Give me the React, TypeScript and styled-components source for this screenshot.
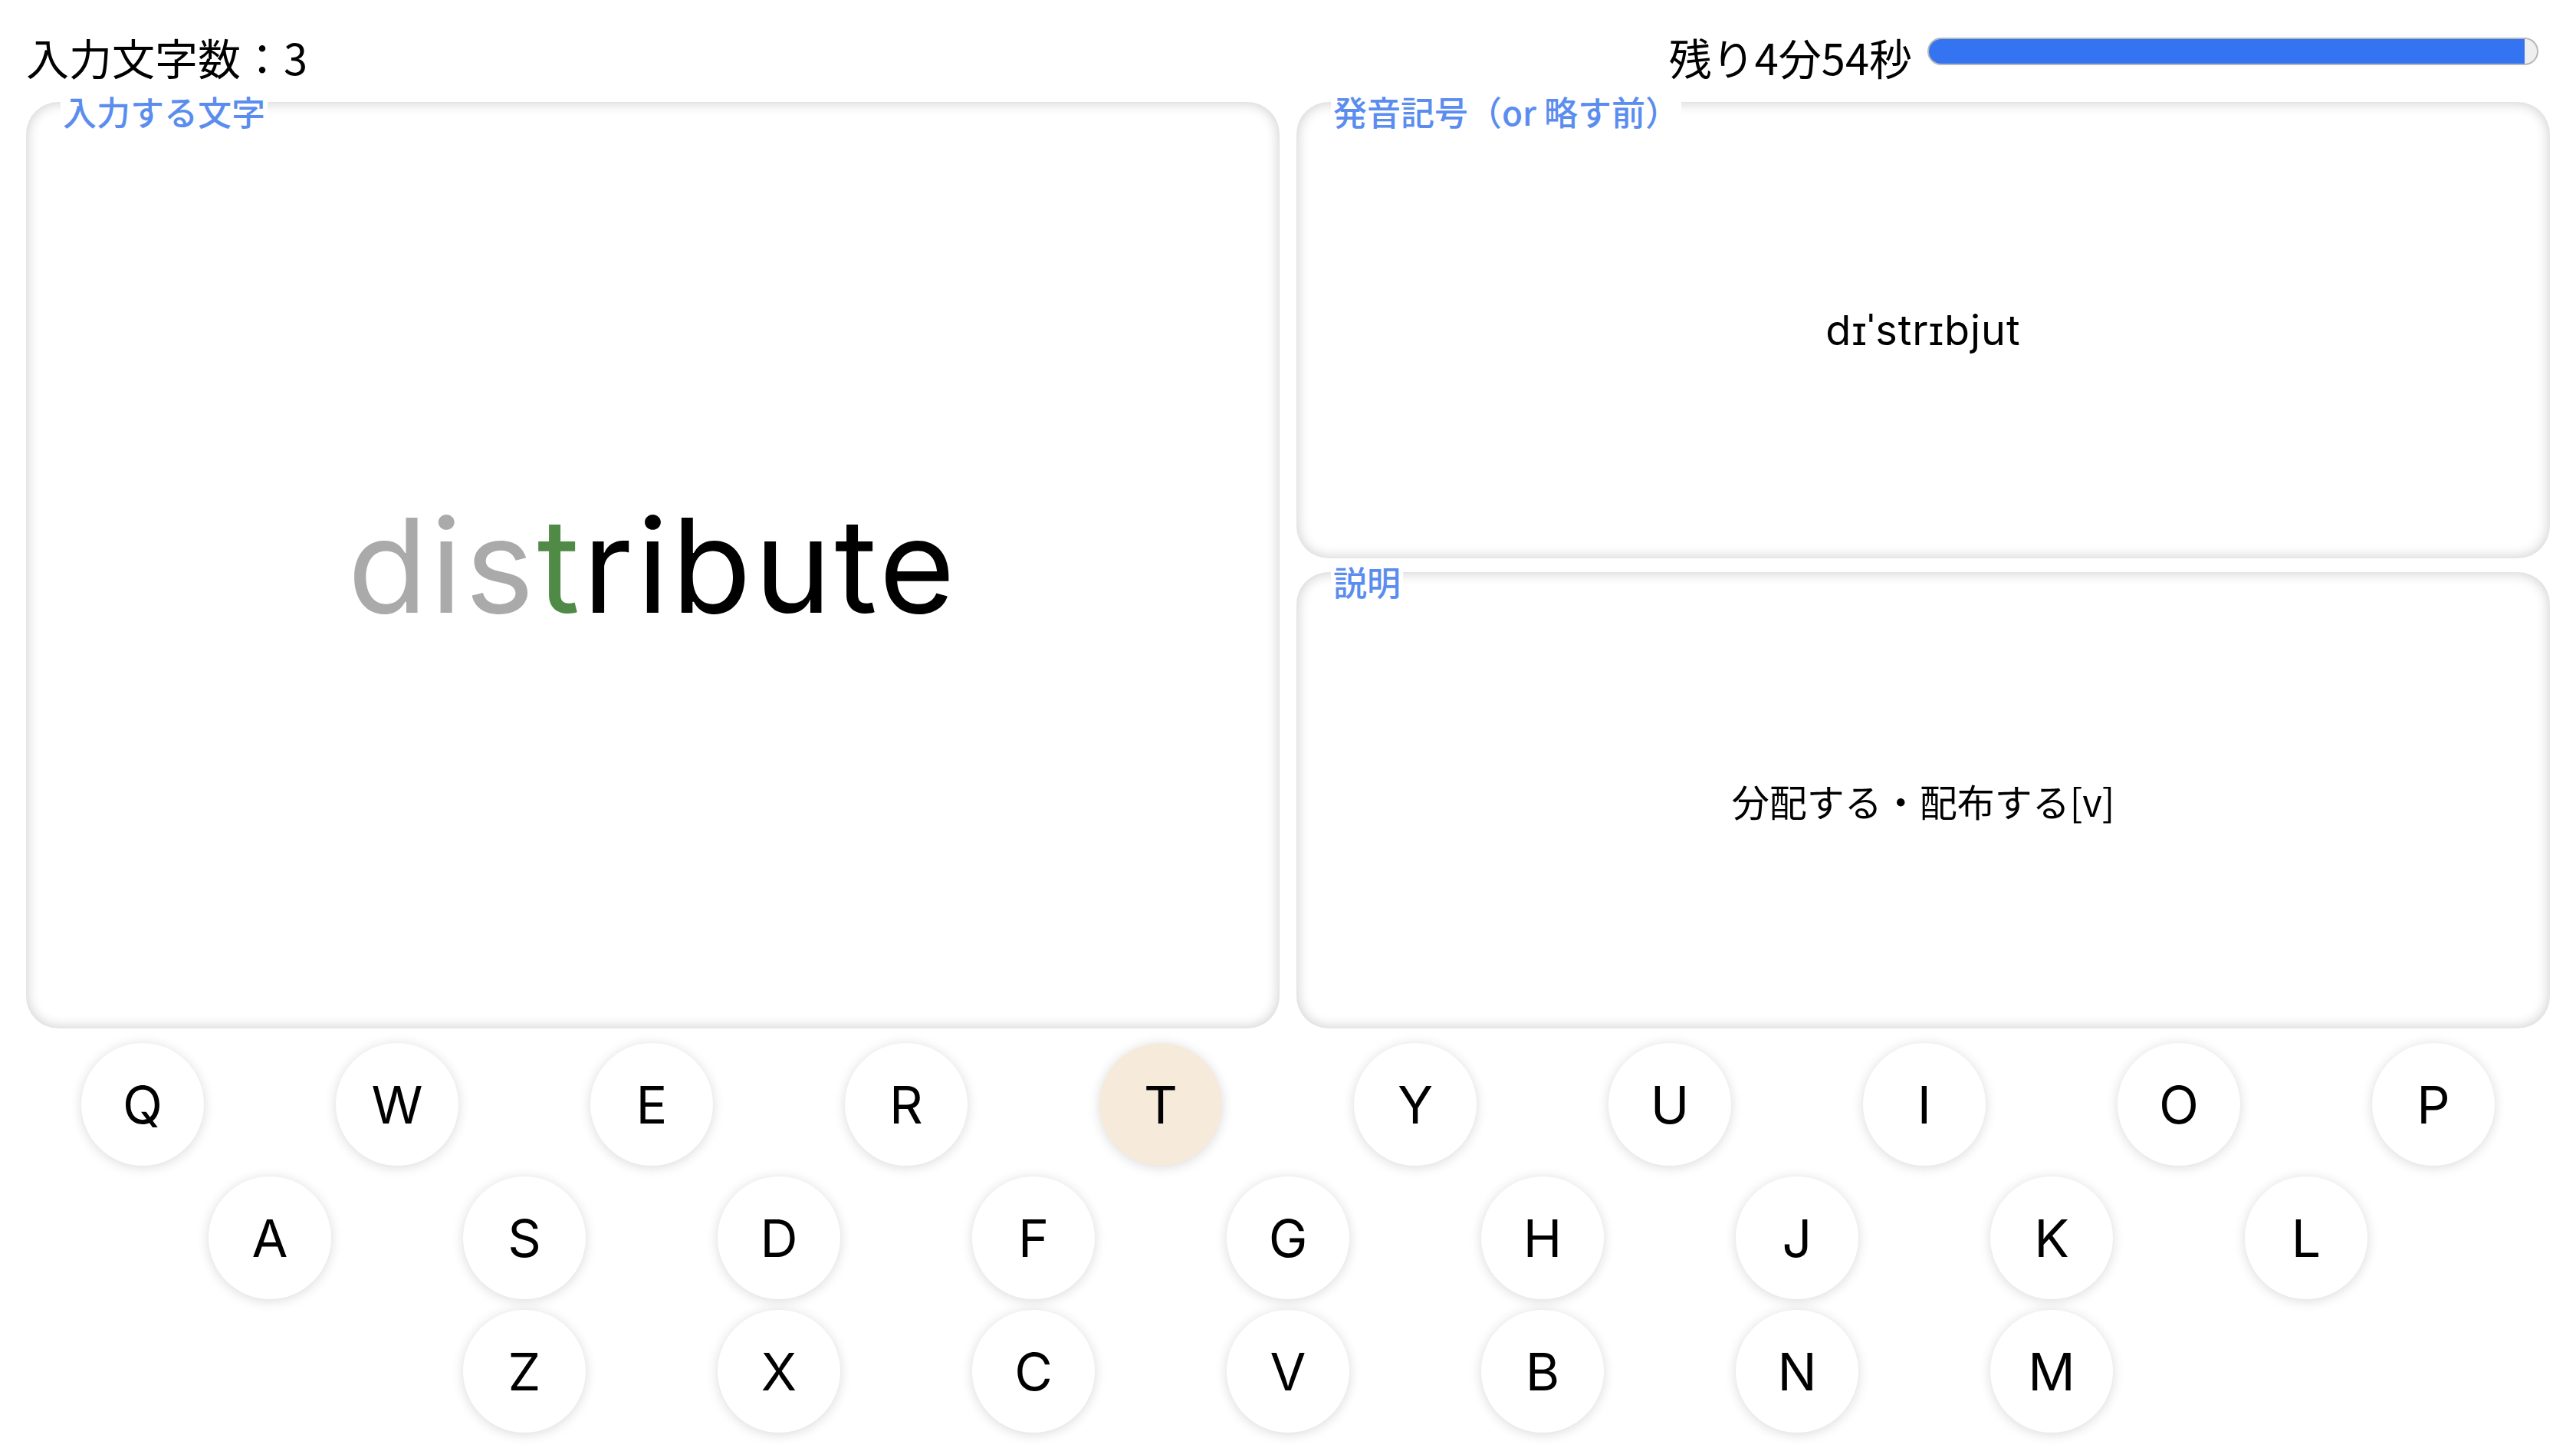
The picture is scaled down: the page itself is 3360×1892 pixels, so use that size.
import * as React from "react"
import styled, { createGlobalStyle } from "styled-components"

const GlobalStyle = createGlobalStyle`
  html, body {
    margin: 0;
    padding: 0;
    background: #ffffff;
  }
  body {
    font-family: "Inter", "Noto Sans CJK JP", sans-serif;
    color: #000;
  }
`

const Page = styled.div`
  width: 3360px;
  height: 1892px;
  box-sizing: border-box;
  padding: 0 34px;
  overflow: hidden;
`

const Header = styled.header`
  display: flex;
  justify-content: space-between;
  align-items: center;
  height: 84px;
  margin-top: 32px;
  margin-bottom: 17px;
`

const HeaderText = styled.div`
  font-family: "Noto Sans CJK JP", sans-serif;
  font-size: 56px;
  line-height: 84px;
  white-space: nowrap;
`

const Timer = styled.div`
  display: flex;
  align-items: center;
  gap: 20px;
  margin-right: 15px;
`

const Track = styled.div`
  position: relative;
  width: 797px;
  height: 36px;
  margin-bottom: 14px;
  box-sizing: border-box;
  border: 2px solid #b8b8b8;
  border-radius: 18px;
  background: #efefef;
  overflow: hidden;
`

const Fill = styled.div`
  height: 100%;
  margin: -2px 0 0 -2px;
  box-sizing: content-box;
  border: 2px solid #5670a8;
  border-right: none;
  border-radius: 18px 0 0 18px;
  background: #3574f0;
`

const Panels = styled.div`
  display: grid;
  grid-template-columns: 1fr 1fr;
  grid-template-rows: 595px 595px;
  column-gap: 22px;
  row-gap: 18px;
`

const Panel = styled.section<{ $tall?: boolean }>`
  position: relative;
  grid-row: ${(p) => (p.$tall ? "1 / span 2" : "auto")};
  display: flex;
  align-items: center;
  justify-content: center;
  border-radius: 42px;
  background: #fff;
  box-shadow: inset 0 0 16px 2px rgba(0, 0, 0, 0.18);
`

const Label = styled.span`
  position: absolute;
  top: -14px;
  left: 45px;
  padding: 0 3px;
  background: #fff;
  color: #5b8def;
  font-family: "Noto Sans CJK JP", sans-serif;
  font-size: 44px;
  font-weight: 500;
  line-height: 52px;
  white-space: nowrap;
`

const Word = styled.div`
  font-family: "Inter", sans-serif;
  font-size: 170px;
  font-weight: 400;
  letter-spacing: 4px;
`

const Part = styled.span<{ $state: "done" | "current" | "todo" }>`
  color: ${(p) =>
    p.$state === "done" ? "#aaaaaa" : p.$state === "current" ? "#4f8a46" : "#000000"};
`

const Phonetic = styled.div`
  font-family: "Inter", sans-serif;
  font-size: 54px;
  letter-spacing: 1px;
`

const Meaning = styled.div`
  font-family: "Noto Sans CJK JP", sans-serif;
  font-size: 49px;
`

const Keyboard = styled.div`
  display: flex;
  flex-direction: column;
  gap: 14px;
  margin-top: 19px;
`

const KeyRow = styled.div`
  display: flex;
  justify-content: center;
  gap: 172px;
`

const Key = styled.button<{ $active?: boolean }>`
  width: 160px;
  height: 160px;
  flex: none;
  padding: 0;
  border: none;
  border-radius: 50%;
  background: ${(p) => (p.$active ? "#f6ebdb" : "#ffffff")};
  box-shadow: 0 2px 16px rgba(0, 0, 0, 0.15);
  font-family: "Inter", sans-serif;
  font-size: 68px;
  color: #000;
  display: flex;
  align-items: center;
  justify-content: center;
`

const rows = ["QWERTYUIOP", "ASDFGHJKL", "ZXCVBNM"]

export default function App() {
  const word = "distribute"
  const typed = 3
  const remaining = 294
  const total = 300

  return (
    <Page>
      <GlobalStyle />
      <Header>
        <HeaderText>入力文字数：{typed}</HeaderText>
        <Timer>
          <HeaderText>残り4分54秒</HeaderText>
          <Track>
            <Fill style={{ width: `${(remaining / total) * 100}%` }} />
          </Track>
        </Timer>
      </Header>

      <Panels>
        <Panel $tall>
          <Label>入力する文字</Label>
          <Word>
            <Part $state="done">{word.slice(0, typed)}</Part>
            <Part $state="current">{word[typed]}</Part>
            <Part $state="todo">{word.slice(typed + 1)}</Part>
          </Word>
        </Panel>
        <Panel>
          <Label>発音記号（or 略す前）</Label>
          <Phonetic>dɪˈstrɪbjut</Phonetic>
        </Panel>
        <Panel>
          <Label>説明</Label>
          <Meaning>分配する・配布する[v]</Meaning>
        </Panel>
      </Panels>

      <Keyboard>
        {rows.map((row) => (
          <KeyRow key={row}>
            {row.split("").map((k) => (
              <Key key={k} $active={k === word[typed].toUpperCase()}>
                {k}
              </Key>
            ))}
          </KeyRow>
        ))}
      </Keyboard>
    </Page>
  )
}
